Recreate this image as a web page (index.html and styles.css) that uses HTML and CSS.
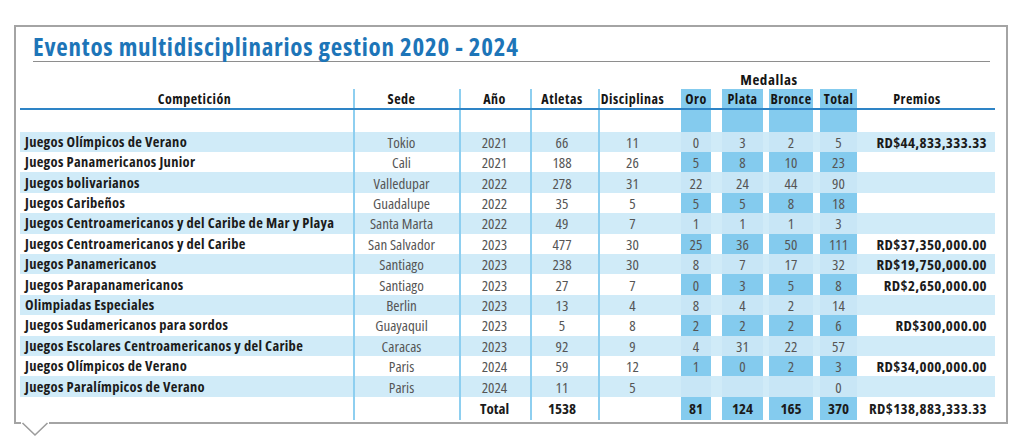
FILE: index.html
```html
<!DOCTYPE html>
<html lang="es">
<head>
<meta charset="utf-8">
<title>Eventos multidisciplinarios gestion 2020 - 2024</title>
<link rel="stylesheet" href="styles.css">
</head>
<body>
<div class="card">
  <h1 class="title">Eventos multidisciplinarios gestion 2020 - 2024</h1>
  <table class="events">
    <colgroup>
      <col class="w-comp"><col class="w-sede"><col class="w-ano"><col class="w-atl"><col class="w-dis">
      <col class="w-oro"><col class="w-gap1"><col class="w-plata"><col class="w-gap2"><col class="w-bronce"><col class="w-gap3"><col class="w-total"><col class="w-prem">
    </colgroup>
    <thead>
      <tr class="group-row">
        <th colspan="5"></th>
        <th colspan="7" class="group">Medallas</th>
        <th></th>
      </tr>
      <tr class="head-row">
        <th class="comp-h">Competición</th>
        <th class="sep sede">Sede</th>
        <th class="sep">Año</th>
        <th class="sep atl">Atletas</th>
        <th class="sep dis">Disciplinas</th>
        <th class="m">Oro</th><th class="g"></th>
        <th class="m">Plata</th><th class="g"></th>
        <th class="m">Bronce</th><th class="g"></th>
        <th class="m">Total</th>
        <th class="prem-h">Premios</th>
      </tr>
    </thead>
    <tbody>
      <tr class="spacer">
        <td></td><td class="sep"></td><td class="sep"></td><td class="sep"></td><td class="sep"></td>
        <td class="m"></td><td class="g"></td><td class="m"></td><td class="g"></td><td class="m"></td><td class="g"></td><td class="m"></td><td></td>
      </tr>
      <tr class="alt">
        <td class="name">Juegos Olímpicos de Verano</td><td class="sep sede">Tokio</td><td class="sep">2021</td><td class="sep atl">66</td><td class="sep dis">11</td>
        <td class="m">0</td><td class="g"></td><td class="m">3</td><td class="g"></td><td class="m">2</td><td class="g"></td><td class="m">5</td><td class="prem">RD$44,833,333.33</td>
      </tr>
      <tr>
        <td class="name">Juegos Panamericanos Junior</td><td class="sep sede">Cali</td><td class="sep">2021</td><td class="sep atl">188</td><td class="sep dis">26</td>
        <td class="m">5</td><td class="g"></td><td class="m">8</td><td class="g"></td><td class="m">10</td><td class="g"></td><td class="m">23</td><td class="prem"></td>
      </tr>
      <tr class="alt">
        <td class="name">Juegos bolivarianos</td><td class="sep sede">Valledupar</td><td class="sep">2022</td><td class="sep atl">278</td><td class="sep dis">31</td>
        <td class="m">22</td><td class="g"></td><td class="m">24</td><td class="g"></td><td class="m">44</td><td class="g"></td><td class="m">90</td><td class="prem"></td>
      </tr>
      <tr>
        <td class="name">Juegos Caribeños</td><td class="sep sede">Guadalupe</td><td class="sep">2022</td><td class="sep atl">35</td><td class="sep dis">5</td>
        <td class="m">5</td><td class="g"></td><td class="m">5</td><td class="g"></td><td class="m">8</td><td class="g"></td><td class="m">18</td><td class="prem"></td>
      </tr>
      <tr class="alt">
        <td class="name">Juegos Centroamericanos y del Caribe de Mar y Playa</td><td class="sep sede">Santa Marta</td><td class="sep">2022</td><td class="sep atl">49</td><td class="sep dis">7</td>
        <td class="m">1</td><td class="g"></td><td class="m">1</td><td class="g"></td><td class="m">1</td><td class="g"></td><td class="m">3</td><td class="prem"></td>
      </tr>
      <tr>
        <td class="name">Juegos Centroamericanos y del Caribe</td><td class="sep sede">San Salvador</td><td class="sep">2023</td><td class="sep atl">477</td><td class="sep dis">30</td>
        <td class="m">25</td><td class="g"></td><td class="m">36</td><td class="g"></td><td class="m">50</td><td class="g"></td><td class="m">111</td><td class="prem">RD$37,350,000.00</td>
      </tr>
      <tr class="alt">
        <td class="name">Juegos Panamericanos</td><td class="sep sede">Santiago</td><td class="sep">2023</td><td class="sep atl">238</td><td class="sep dis">30</td>
        <td class="m">8</td><td class="g"></td><td class="m">7</td><td class="g"></td><td class="m">17</td><td class="g"></td><td class="m">32</td><td class="prem">RD$19,750,000.00</td>
      </tr>
      <tr>
        <td class="name">Juegos Parapanamericanos</td><td class="sep sede">Santiago</td><td class="sep">2023</td><td class="sep atl">27</td><td class="sep dis">7</td>
        <td class="m">0</td><td class="g"></td><td class="m">3</td><td class="g"></td><td class="m">5</td><td class="g"></td><td class="m">8</td><td class="prem">RD$2,650,000.00</td>
      </tr>
      <tr class="alt">
        <td class="name">Olimpiadas Especiales</td><td class="sep sede">Berlin</td><td class="sep">2023</td><td class="sep atl">13</td><td class="sep dis">4</td>
        <td class="m">8</td><td class="g"></td><td class="m">4</td><td class="g"></td><td class="m">2</td><td class="g"></td><td class="m">14</td><td class="prem"></td>
      </tr>
      <tr>
        <td class="name">Juegos Sudamericanos para sordos</td><td class="sep sede">Guayaquil</td><td class="sep">2023</td><td class="sep atl">5</td><td class="sep dis">8</td>
        <td class="m">2</td><td class="g"></td><td class="m">2</td><td class="g"></td><td class="m">2</td><td class="g"></td><td class="m">6</td><td class="prem">RD$300,000.00</td>
      </tr>
      <tr class="alt">
        <td class="name">Juegos Escolares Centroamericanos y del Caribe</td><td class="sep sede">Caracas</td><td class="sep">2023</td><td class="sep atl">92</td><td class="sep dis">9</td>
        <td class="m">4</td><td class="g"></td><td class="m">31</td><td class="g"></td><td class="m">22</td><td class="g"></td><td class="m">57</td><td class="prem"></td>
      </tr>
      <tr>
        <td class="name">Juegos Olímpicos de Verano</td><td class="sep sede">Paris</td><td class="sep">2024</td><td class="sep atl">59</td><td class="sep dis">12</td>
        <td class="m">1</td><td class="g"></td><td class="m">0</td><td class="g"></td><td class="m">2</td><td class="g"></td><td class="m">3</td><td class="prem">RD$34,000,000.00</td>
      </tr>
      <tr class="alt">
        <td class="name">Juegos Paralímpicos de Verano</td><td class="sep sede">Paris</td><td class="sep">2024</td><td class="sep atl">11</td><td class="sep dis">5</td>
        <td class="m"></td><td class="g"></td><td class="m"></td><td class="g"></td><td class="m"></td><td class="g"></td><td class="m">0</td><td class="prem"></td>
      </tr>
    </tbody>
    <tfoot>
      <tr class="total-row">
        <td></td><td class="sep sede"></td><td class="sep">Total</td><td class="sep atl">1538</td><td class="sep dis"></td>
        <td class="m">81</td><td class="g"></td><td class="m">124</td><td class="g"></td><td class="m">165</td><td class="g"></td><td class="m">370</td><td class="prem">RD$138,883,333.33</td>
      </tr>
    </tfoot>
  </table>
  <svg class="tail" width="28" height="15" viewBox="0 0 28 15" aria-hidden="true">
    <polygon points="0,0 28,0 28,2 14,13 0,2" fill="#ffffff"/>
    <polyline points="1.5,1 14,13 26.5,1" fill="none" stroke="#9c9c9c" stroke-width="1.6"/>
  </svg>
</div>
</body>
</html>
```
FILE: styles.css
```css
* { box-sizing: border-box; }

html { height: 100%; }

body {
  margin: 0;
  min-height: 438px;
  padding: 25px 16px 14px 14px;
  background: #ffffff;
  font-family: "Open Sans", "DejaVu Sans Condensed", sans-serif;
  font-stretch: 75%;
  color: #555555;
}

.card {
  position: relative;
  height: 399px;
  border: 2px solid #a4a4a4;
  padding: 0 11px 0 4px;
}

.tail {
  position: absolute;
  left: 5px;
  bottom: -15px;
  display: block;
}

.title {
  margin: 0 5px 0 13px;
  padding-top: 4px;
  font-size: 25px;
  letter-spacing: 0.75px;
  line-height: 30px;
  font-weight: 700;
  color: #1d75b8;
  border-bottom: 1px solid #8e8e8e;
}

.events {
  width: 975px;
  table-layout: fixed;
  border-collapse: separate;
  border-spacing: 0;
  font-size: 15px;
}

.w-comp { width: 333px; }
.w-sede { width: 106px; }
.w-ano { width: 71px; }
.w-atl { width: 68px; }
.w-dis { width: 83px; }
.w-oro { width: 30px; }
.w-gap1 { width: 11px; }
.w-plata { width: 41px; }
.w-gap2 { width: 6px; }
.w-bronce { width: 44px; }
.w-gap3 { width: 7px; }
.w-total { width: 37px; }
.w-prem { width: 138px; }

.events th,
.events td {
  padding: 0;
  text-align: center;
  white-space: nowrap;
  overflow: visible;
}

.events th {
  font-size: 14px;
  letter-spacing: 0.5px;
  font-weight: 700;
  color: #151515;
}

.group-row th {
  height: 27px;
  line-height: 20px;
  vertical-align: bottom;
}

.group-row .group { font-size: 15px; letter-spacing: 0.6px; }

.head-row th {
  height: 21px;
  line-height: 19px;
  border-bottom: 2px solid #2e84c6;
}

.comp-h { padding-left: 16px !important; }
.prem-h { padding-right: 18px !important; }

.spacer td { height: 21.7px; }

.events tbody tr:not(.spacer) td { height: 20.4px; line-height: 20px; }

.alt { background: #d0ebf8; }

.sep { box-shadow: inset 2px 0 0 #8ecff0; }
.sede { padding-right: 9px !important; }
.atl { padding-right: 4px !important; }
.dis { padding-right: 14px !important; }

.m { background: #84cbee; }
.alt .m { background: #c8e6f6; }

.name {
  text-align: left !important;
  padding-left: 5px !important;
  font-size: 14.5px;
  letter-spacing: 0.3px;
  font-weight: 700;
  color: #1b1b1b;
}

.prem {
  text-align: right !important;
  padding-right: 8px !important;
  font-size: 15px;
  letter-spacing: 0.35px;
  font-weight: 700;
  color: #1b1b1b;
}

.total-row td {
  height: 23px;
  line-height: 22px;
  font-weight: 700;
  color: #1b1b1b;
}
```
